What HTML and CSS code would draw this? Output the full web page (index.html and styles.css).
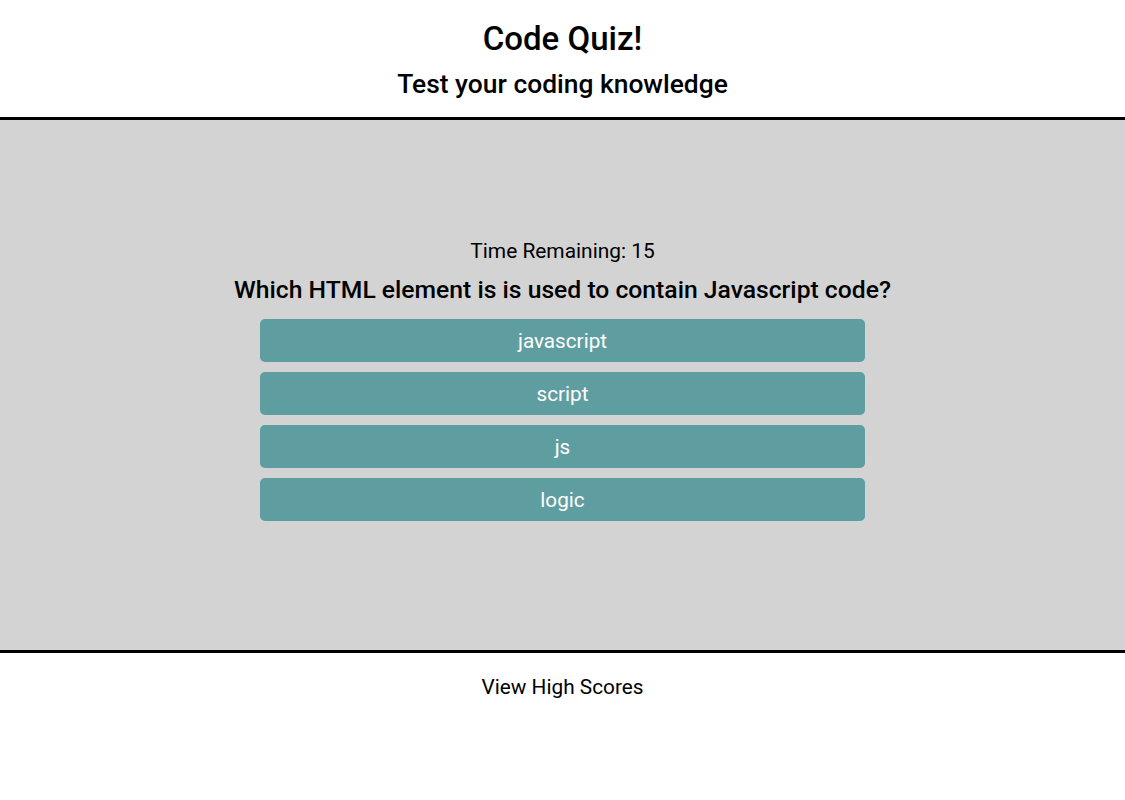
FILE: index.html
```html
<!DOCTYPE html>
<html lang="en">
<head>
<meta charset="utf-8">
<title>Code Quiz!</title>
<link rel="stylesheet" href="styles.css">
</head>
<body>
<header class="header">
  <h1 class="title">Code Quiz!</h1>
  <h2 class="subtitle">Test your coding knowledge</h2>
</header>
<main class="quiz">
  <div class="quiz-inner">
    <p class="timer">Time Remaining: 15</p>
    <p class="question">Which HTML element is is used to contain Javascript code?</p>
    <div class="answers">
      <button class="answer">javascript</button>
      <button class="answer">script</button>
      <button class="answer">js</button>
      <button class="answer">logic</button>
    </div>
  </div>
</main>
<footer class="footer">
  <a class="scores-link">View High Scores</a>
</footer>
</body>
</html>
```
FILE: styles.css
```css
* { box-sizing: border-box; }
html, body { margin: 0; padding: 0; background: #fff; }
body {
  font-family: Roboto, "Liberation Sans", sans-serif;
  color: #000;
}
.header {
  text-align: center;
  padding: 20px 0 18px;
  border-bottom: 3px solid #000;
}
.title {
  margin: 0;
  font-size: 33px;
  line-height: 38px;
  font-weight: 500;
}
.subtitle {
  margin: 12px 0 0;
  font-size: 26.4px;
  line-height: 29px;
  font-weight: 500;
}
.quiz {
  background: #d3d3d3;
  height: 533px;
  border-bottom: 3px solid #000;
  padding-top: 119px;
}
.quiz-inner {
  display: flex;
  flex-direction: column;
  align-items: center;
}
.timer {
  margin: 0;
  font-size: 20.9px;
  line-height: 24px;
}
.question {
  margin: 12px 0 0;
  font-size: 24.7px;
  line-height: 29px;
  font-weight: 500;
}
.answers {
  margin-top: 15px;
  display: flex;
  flex-direction: column;
  gap: 10px;
}
.answer {
  width: 605px;
  height: 43px;
  border: none;
  border-radius: 5px;
  background: #5f9ea0;
  color: #fff;
  font-family: Roboto, "Liberation Sans", sans-serif;
  font-size: 20.7px;
  padding: 0;
  cursor: pointer;
}
.footer {
  text-align: center;
  padding-top: 22px;
}
.scores-link {
  font-size: 20.8px;
  line-height: 24px;
  color: #000;
  cursor: pointer;
}
```
